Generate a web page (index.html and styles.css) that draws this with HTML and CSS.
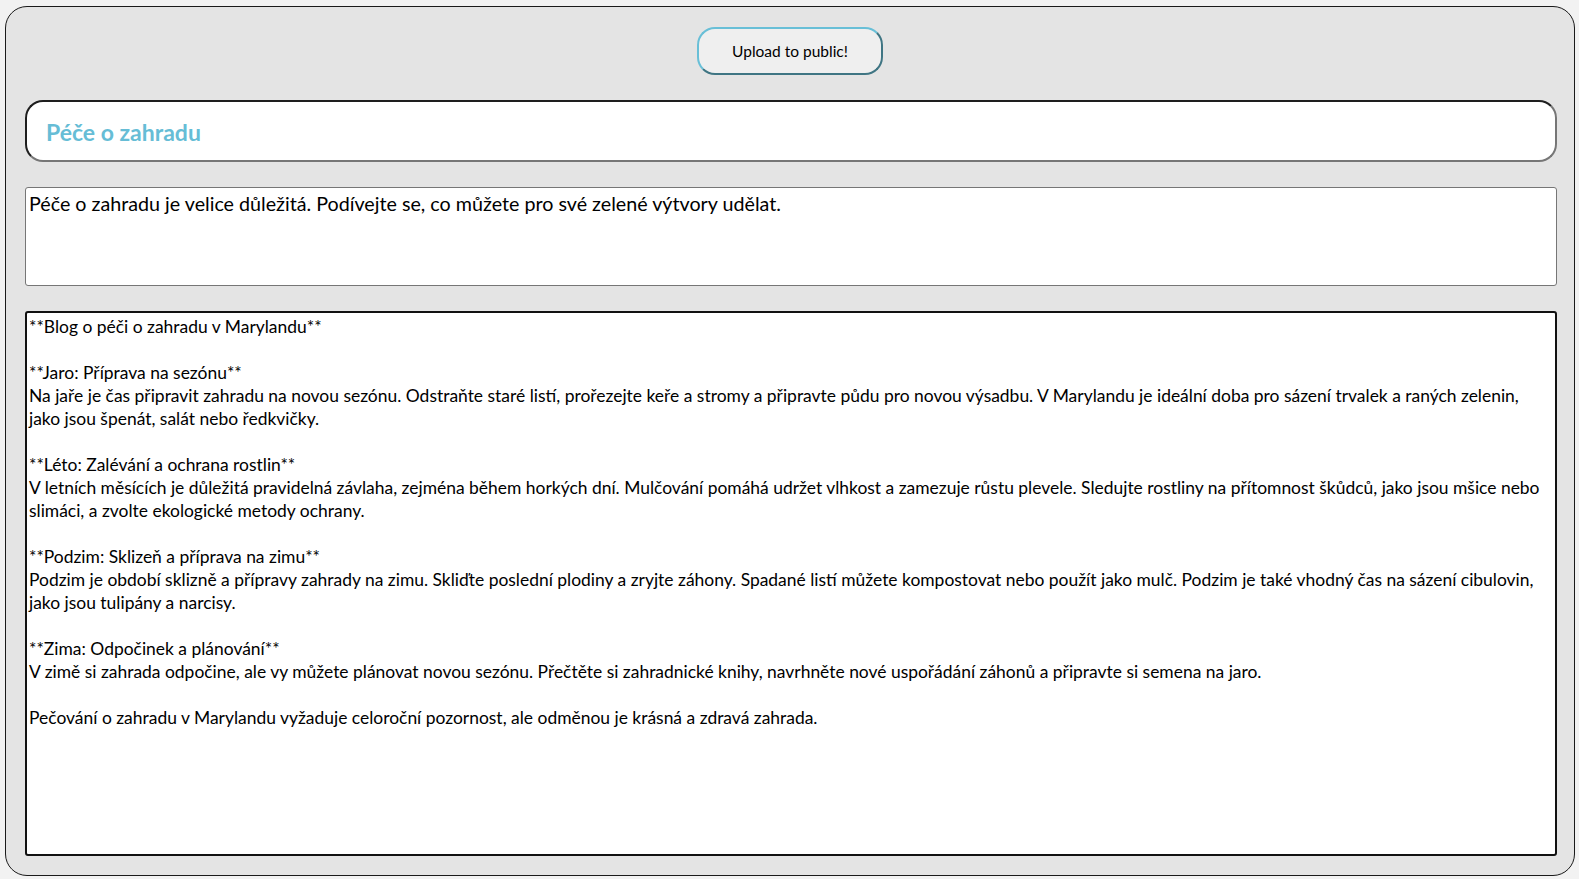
FILE: index.html
```html
<!DOCTYPE html>
<html lang="cs">
<head>
<meta charset="utf-8">
<title>Péče o zahradu</title>
<link rel="stylesheet" href="styles.css">
</head>
<body>
<main class="panel">
  <button class="upload-btn" type="button">Upload to public!</button>
  <input class="title-field" type="text" value="Péče o zahradu">
  <textarea class="desc-field">Péče o zahradu je velice důležitá. Podívejte se, co můžete pro své zelené výtvory udělat.</textarea>
  <textarea class="content-field">**Blog o péči o zahradu v Marylandu**

**Jaro: Příprava na sezónu**
Na jaře je čas připravit zahradu na novou sezónu. Odstraňte staré listí, prořezejte keře a stromy a připravte půdu pro novou výsadbu. V Marylandu je ideální doba pro sázení trvalek a raných zelenin, jako jsou špenát, salát nebo ředkvičky.

**Léto: Zalévání a ochrana rostlin**
V letních měsících je důležitá pravidelná závlaha, zejména během horkých dní. Mulčování pomáhá udržet vlhkost a zamezuje růstu plevele. Sledujte rostliny na přítomnost škůdců, jako jsou mšice nebo slimáci, a zvolte ekologické metody ochrany.

**Podzim: Sklizeň a příprava na zimu**
Podzim je období sklizně a přípravy zahrady na zimu. Skliďte poslední plodiny a zryjte záhony. Spadané listí můžete kompostovat nebo použít jako mulč. Podzim je také vhodný čas na sázení cibulovin, jako jsou tulipány a narcisy.

**Zima: Odpočinek a plánování**
V zimě si zahrada odpočine, ale vy můžete plánovat novou sezónu. Přečtěte si zahradnické knihy, navrhněte nové uspořádání záhonů a připravte si semena na jaro.

Pečování o zahradu v Marylandu vyžaduje celoroční pozornost, ale odměnou je krásná a zdravá zahrada.</textarea>
</main>
</body>
</html>
```

FILE: styles.css
```css
* { box-sizing: border-box; }

html, body {
  margin: 0;
  height: 100%;
}

body {
  background: #f2f2f2;
  padding: 6px 4px 3px 5px;
  font-family: Lato, "Noto Sans", sans-serif;
}

.panel {
  height: 870px;
  background: #e4e4e4;
  border: 1px solid #1a1a1a;
  border-radius: 22px;
  padding: 20px 17px 19px 19px;
  display: flex;
  flex-direction: column;
  gap: 25px;
}

.upload-btn {
  align-self: center;
  width: 186px;
  height: 48px;
  flex: none;
  margin-right: 2px;
  background: #efefef;
  border: 2px solid;
  border-top-color: #68bfd7;
  border-left-color: #68bfd7;
  border-right-color: #3f7583;
  border-bottom-color: #3f7583;
  border-radius: 18px;
  font-family: Lato, sans-serif;
  font-size: 15.5px;
  color: #000;
  padding: 0;
  cursor: pointer;
}

.title-field {
  flex: none;
  height: 62px;
  width: 100%;
  background: #fff;
  border: 2px solid;
  border-top-color: #1e1e1e;
  border-left-color: #1e1e1e;
  border-right-color: #767676;
  border-bottom-color: #767676;
  border-radius: 18px;
  padding: 1px 19px 0;
  font-family: Lato, sans-serif;
  font-weight: 700;
  font-size: 23px;
  color: #66bdd6;
  outline: none;
}

.desc-field {
  flex: none;
  height: 99px;
  width: 100%;
  background: #fff;
  border: 1px solid #767676;
  border-radius: 3px;
  padding: 4px 3px 2px;
  font-family: Lato, sans-serif;
  font-size: 19.7px;
  line-height: 24px;
  color: #000;
  resize: none;
  outline: none;
}

.content-field {
  flex: 1;
  width: 100%;
  background: #fff;
  border: 2px solid #111;
  border-radius: 3px;
  padding: 2px 10px 2px 2px;
  font-family: Lato, sans-serif;
  font-size: 17.45px;
  line-height: 23px;
  color: #000;
  resize: none;
  outline: none;
  overflow: hidden;
}
```
